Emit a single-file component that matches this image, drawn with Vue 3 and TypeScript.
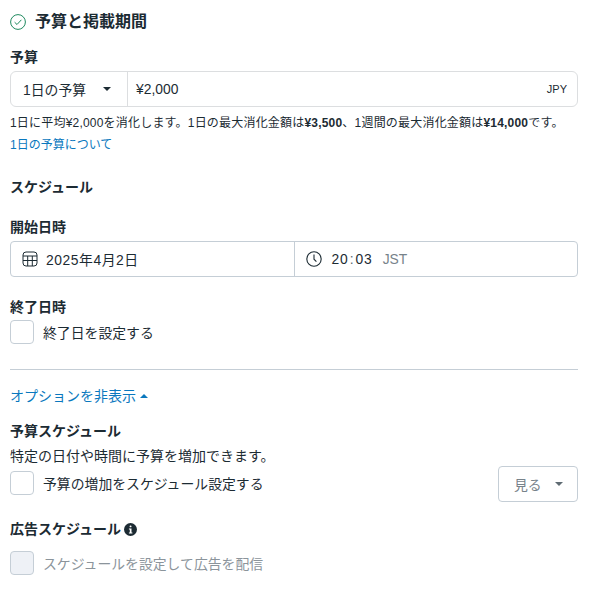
<template>
  <div class="page">
    <div class="title-row">
      <svg class="check-icon" width="16" height="16" viewBox="0 0 16 16">
        <circle cx="8" cy="8" r="7.4" fill="none" stroke="#1f8a5f" stroke-width="1" />
        <path d="M4.6 8.2 L7 10.5 L11.4 5.8" fill="none" stroke="#1f8a5f" stroke-width="1" />
      </svg>
      <h2>予算と掲載期間</h2>
    </div>

    <div class="label budget-label">予算</div>
    <div class="budget-box">
      <div class="budget-type">
        <span>1日の予算</span>
        <i class="caret"></i>
      </div>
      <div class="budget-value">
        <span>¥2,000</span>
        <span class="currency">JPY</span>
      </div>
    </div>
    <p class="note">
      1日に平均¥2,000を消化します。1日の最大消化金額は<b>¥3,500</b>、1週間の最大消化金額は<b>¥14,000</b>です。
    </p>
    <a class="link about">1日の予算について</a>

    <div class="label schedule">スケジュール</div>

    <div class="label start-label">開始日時</div>
    <div class="date-box">
      <div class="date-cell">
        <svg class="cell-icon" width="16" height="16" viewBox="0 0 16 16" fill="none" stroke="#1c2b33" stroke-width="1">
          <rect x="1" y="1" width="14" height="14" rx="3" />
          <path d="M1 5 H15 M1 9.5 H15 M5.7 5 V15 M10.3 5 V15" />
        </svg>
        <span class="date">2025年4月2日</span>
      </div>
      <div class="date-cell time-cell">
        <svg class="cell-icon" width="16" height="16" viewBox="0 0 16 16" fill="none" stroke="#1c2b33" stroke-width="1.1">
          <circle cx="8" cy="8" r="7.2" />
          <path d="M8 3.6 V8.2 L10.4 10.6" />
        </svg>
        <span class="time">20<span class="colon">:</span>03</span>
        <span class="zone">JST</span>
      </div>
    </div>

    <div class="label end-label">終了日時</div>
    <label class="check-row end-row">
      <span class="box"></span>
      <span>終了日を設定する</span>
    </label>

    <hr class="divider" />

    <a class="link toggle">オプションを非表示<i class="caret-up"></i></a>

    <div class="label budget-schedule">予算スケジュール</div>
    <p class="desc">特定の日付や時間に予算を増加できます。</p>
    <div class="increase-row">
      <label class="check-row">
        <span class="box"></span>
        <span>予算の増加をスケジュール設定する</span>
      </label>
      <button class="view-btn" type="button" disabled>
        <span>見る</span>
        <i class="caret muted"></i>
      </button>
    </div>

    <div class="label ad-label">
      広告スケジュール
      <svg width="13" height="13" viewBox="0 0 13 13">
        <circle cx="6.5" cy="6.5" r="6.5" fill="#1c2b33" />
        <rect x="5.6" y="2.4" width="1.9" height="1.9" rx="0.9" fill="#fff" />
        <path d="M4.9 5.5 H7.5 V9.4 H8.4 V10.5 H4.9 V9.4 H5.8 V6.6 H4.9 Z" fill="#fff" />
      </svg>
    </div>
    <label class="check-row disabled-row">
      <span class="box disabled-box"></span>
      <span>スケジュールを設定して広告を配信</span>
    </label>
  </div>
</template>

<script setup lang="ts">
</script>

<style>
html,
body {
  background: #fff;
}
</style>

<style scoped>
.page {
  width: 568px;
  height: 602px;
  padding: 0 11px 0 10px;
  font-family: "Liberation Sans", "Noto Sans CJK JP", sans-serif;
  font-size: 13.85px;
  color: #1c2b33;
  overflow: hidden;
}

.title-row {
  display: flex;
  align-items: center;
  gap: 9px;
  height: 21px;
  padding-top: 11px;
}

.check-icon {
  flex: none;
}

h2 {
  margin: 0;
  font-size: 16px;
  line-height: 21px;
  font-weight: 700;
}

.label {
  padding-bottom: 2px;
  font-size: 14px;
  line-height: 16px;
  font-weight: 700;
}

.budget-label {
  margin-top: 17px;
}

.budget-box {
  display: flex;
  height: 34px;
  margin-top: 4px;
  border: 1px solid #dcdee0;
  border-radius: 6px;
}

.budget-type {
  display: flex;
  align-items: center;
  justify-content: space-between;
  flex: none;
  width: 88px;
  padding: 0 16px 0 12px;
  border-right: 1px solid #dcdee0;
}

.budget-value {
  flex: 1;
  display: flex;
  align-items: center;
  justify-content: space-between;
  padding: 0 10px 0 8px;
}

.currency {
  font-size: 11px;
}

.caret {
  display: block;
  width: 0;
  height: 0;
  border-left: 4.5px solid transparent;
  border-right: 4.5px solid transparent;
  border-top: 4.5px solid #1c2b33;
}

.caret.muted {
  border-top-color: #5f6b73;
}

.note {
  margin: 8px 0 0;
  font-size: 12px;
  line-height: 16px;
  letter-spacing: 0.2px;
  white-space: nowrap;
}

.link {
  display: block;
  color: #0a78be;
}

.about {
  margin-top: 6px;
  font-size: 12px;
  line-height: 16px;
}

.schedule {
  margin-top: 26px;
}

.start-label {
  margin-top: 22px;
}

.date-box {
  display: flex;
  height: 34px;
  margin-top: 4px;
  border: 1px solid #c5ced6;
  border-radius: 4px;
}

.date-cell {
  flex: 1;
  display: flex;
  align-items: center;
  gap: 8px;
  padding-left: 11px;
}

.time-cell {
  gap: 9px;
  border-left: 1px solid #c5ced6;
}

.cell-icon {
  flex: none;
}

.date {
  letter-spacing: 0.55px;
}

.time {
  margin-left: 1px;
  letter-spacing: 0.9px;
}

.colon {
  padding: 0 1px;
  color: #5f6b73;
}

.zone {
  margin-left: 1px;
  color: #77828a;
}

.end-label {
  margin-top: 22px;
}

.check-row {
  display: flex;
  align-items: center;
  gap: 9px;
}

.end-row {
  margin-top: 3px;
}

.box {
  width: 22px;
  height: 22px;
  flex: none;
  border: 1px solid #c5ced6;
  border-radius: 4px;
  background: #fff;
}

.divider {
  margin: 25px 0 0;
  border: 0;
  border-top: 1px solid #c5ced6;
}

.toggle {
  display: flex;
  align-items: center;
  gap: 4px;
  margin-top: 17px;
  font-size: 14px;
  line-height: 18px;
}

.caret-up {
  width: 0;
  height: 0;
  border-left: 4px solid transparent;
  border-right: 4px solid transparent;
  border-bottom: 4px solid #0a78be;
}

.budget-schedule {
  margin-top: 18px;
}

.desc {
  margin: 6px 0 0;
  font-size: 14px;
  line-height: 18px;
}

.increase-row {
  display: flex;
  align-items: center;
  justify-content: space-between;
  margin-top: 1px;
}

.increase-row .check-row {
  margin-bottom: 2px;
}

.view-btn {
  display: flex;
  align-items: center;
  justify-content: space-between;
  width: 80px;
  height: 36px;
  padding: 0 14px 0 15px;
  border: 1px solid #c5ced6;
  border-radius: 4px;
  background: #fff;
  color: #77828a;
  font: inherit;
}

.ad-label {
  display: flex;
  align-items: center;
  gap: 3px;
  margin-top: 19px;
}

.disabled-row {
  margin-top: 12px;
  color: #8b949b;
}

.disabled-box {
  background: #eef1f6;
}
</style>
